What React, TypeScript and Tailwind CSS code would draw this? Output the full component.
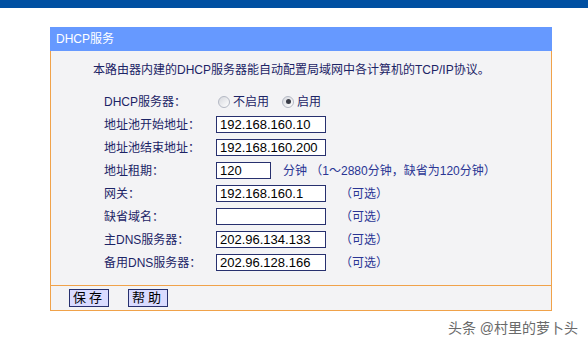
import React from 'react';

const cjk = { fontFamily: '"Liberation Sans", "Noto Sans CJK SC", sans-serif' };

type Row = {
  label: string;
  value?: string;
  width?: string;
  hint?: string;
};

const rows: Row[] = [
  { label: '地址池开始地址：', value: '192.168.160.10' },
  { label: '地址池结束地址：', value: '192.168.160.200' },
  { label: '地址租期：', value: '120', width: 'w-[55px]', hint: '分钟 （1～2880分钟，缺省为120分钟）' },
  { label: '网关：', value: '192.168.160.1', hint: '（可选）' },
  { label: '缺省域名：', value: '', hint: '（可选）' },
  { label: '主DNS服务器：', value: '202.96.134.133', hint: '（可选）' },
  { label: '备用DNS服务器：', value: '202.96.128.166', hint: '（可选）' },
];

function Radio({ checked }: { checked?: boolean }) {
  return (
    <span className="flex h-[12px] w-[12px] items-center justify-center rounded-full border border-[#b4b8c4] bg-gradient-to-br from-[#d6d8de] to-[#ffffff]">
      {checked ? <span className="h-[5px] w-[5px] rounded-full bg-[#3a3d48]" /> : null}
    </span>
  );
}

function renderRow({ label, value, width = 'w-[110px]', hint }: Row) {
  return (
    <div key={label} className="flex h-[23px] items-center">
      <div className="w-[112px] text-[12px] text-[#1c2466]">{label}</div>
      <input
        readOnly
        value={value}
        className={`${width} h-[17px] border border-[#27306e] bg-white px-[3px] text-[13px] leading-[15px] text-black outline-none`}
        style={{ fontFamily: '"Liberation Sans", sans-serif' }}
      />
      {hint ? (
        <span className={`${value === '120' ? 'ml-[12px]' : 'ml-[14px]'} text-[12px] text-[#2a3594]`}>{hint}</span>
      ) : null}
    </div>
  );
}

export default function App() {
  return (
    <div className="relative h-[346px] w-[588px] bg-white" style={cjk}>
      <div className="h-[8px] bg-[#0050a2]" />
      <div className="ml-[50px] mt-[19px] w-[502px]">
        <div className="flex h-[24px] items-center bg-[#6699ff] pl-[6px] text-[12px] text-white">DHCP服务</div>
        <div className="border-x border-[#f0a24a] bg-[#f3f3f5]">
          <div className="pl-[42px] pt-[11px] text-[12px] leading-[16px] text-[#1c2466]">
            本路由器内建的DHCP服务器能自动配置局域网中各计算机的TCP/IP协议。
          </div>
          <div className="pb-[11px] pl-[53px] pt-[12px]">
            <div className="flex h-[23px] items-center">
              <div className="w-[114px] text-[12px] text-[#1c2466]">DHCP服务器：</div>
              <div className="flex items-center gap-[3px] text-[12px] text-[#1c2466]">
                <Radio />
                <span>不启用</span>
              </div>
              <div className="ml-[13px] flex items-center gap-[3px] text-[12px] text-[#1c2466]">
                <Radio checked />
                <span>启用</span>
              </div>
            </div>
            {rows.map(renderRow)}
          </div>
        </div>
        <div className="flex h-[26px] items-center gap-[19px] border border-[#f0a24a] bg-[#f3f3f5] pl-[18px]">
          <button className="h-[18px] w-[40px] border border-[#27306e] bg-[#d9dbff] text-[13px] leading-[16px] tracking-[3px] text-black">
            保存
          </button>
          <button className="h-[18px] w-[40px] border border-[#27306e] bg-[#d9dbff] text-[13px] leading-[16px] tracking-[3px] text-black">
            帮助
          </button>
        </div>
      </div>
      <div className="absolute right-[10px] top-[318px] text-[14px] text-[#6a6a6a]">头条 @村里的萝卜头</div>
    </div>
  );
}
